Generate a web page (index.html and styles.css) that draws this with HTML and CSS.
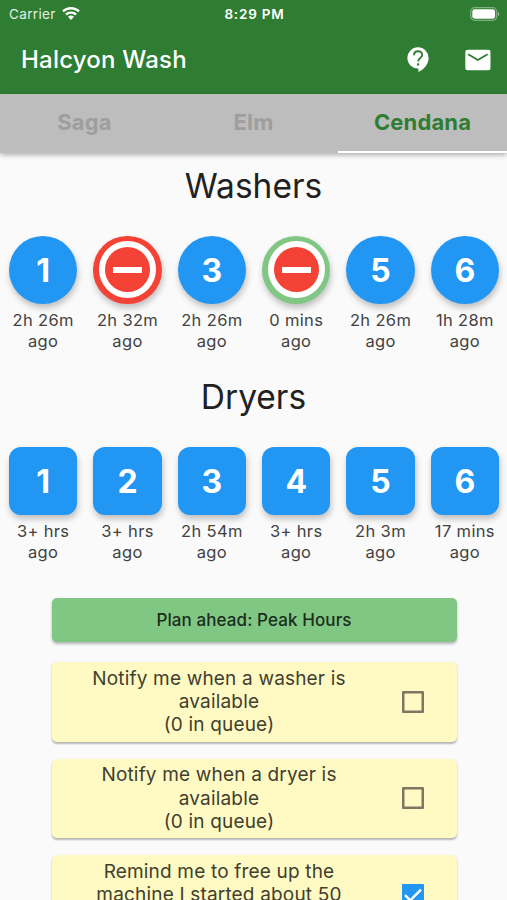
FILE: index.html
```html
<!DOCTYPE html>
<html lang="en">
<head>
    <meta charset="UTF-8">
    <title>Halcyon Wash</title>
    <link rel="stylesheet" href="styles.css">
</head>
<body>
    <header>
        <div class="status">
            <div class="carrier">
                <span>Carrier</span>
                <svg width="18" height="14" viewBox="0 0 18 14" fill="#fff">
                    <path d="M9 0C5.600 0 2.500 1.300 0.200 3.500L1.800 5.200C3.700 3.400 6.200 2.400 9 2.400S14.300 3.400 16.200 5.200L17.800 3.500C15.500 1.300 12.400 0 9 0Z"/>
                    <path d="M9 4.400C6.700 4.400 4.700 5.200 3.100 6.700L4.800 8.400C5.900 7.400 7.400 6.800 9 6.800S12.100 7.400 13.200 8.400L14.900 6.700C13.300 5.200 11.300 4.400 9 4.400Z"/>
                    <path d="M9 8.600C7.800 8.600 6.800 9 6 9.700L9 12.900L12 9.700C11.200 9 10.200 8.600 9 8.600Z"/>
                </svg>
            </div>
            <div class="clock">8:29 PM</div>
            <svg class="battery" width="30" height="14" viewBox="0 0 30 14">
                <rect x="0.700" y="0.700" width="26" height="12.600" rx="4" fill="none" stroke="#fff" stroke-opacity="0.4" stroke-width="1.200"/>
                <rect x="2.300" y="2.300" width="22.800" height="9.400" rx="2.400" fill="#fff"/>
                <path d="M28 4.800C29.800 5.600 29.800 8.400 28 9.200Z" fill="#fff" fill-opacity="0.5"/>
            </svg>
        </div>
        <div class="appbar">
            <h1>Halcyon Wash</h1>
            <svg class="help" width="22" height="25" viewBox="0 0 22 25">
                <path d="M11 0.300A10.600 10.600 0 1 0 11 21.500H11.400V24.900C17.500 22 21.600 16.800 21.600 10.900A10.600 10.600 0 0 0 11 0.300Z" fill="#fff"/>
                <path d="M7 8.200C7 3 15.200 3 15.200 7.800C15.200 10.900 11.100 11.200 11.100 14.600" fill="none" stroke="#2e7d32" stroke-width="1.900"/>
                <rect x="10" y="16.300" width="2.200" height="2.200" fill="#2e7d32"/>
            </svg>
            <svg class="mail" width="26" height="22" viewBox="0 0 26 22">
                <rect x="0.300" y="0.700" width="25.200" height="20.600" rx="2.300" fill="#fff"/>
                <path d="M3.200 5.200L12.900 11L22.600 5.200" fill="none" stroke="#2e7d32" stroke-width="1.900"/>
            </svg>
        </div>
        <nav class="tabs">
            <div class="tab">Saga</div>
            <div class="tab">Elm</div>
            <div class="tab active">Cendana</div>
        </nav>
    </header>

    <main>
        <h2>Washers</h2>
        <div class="machines">
            <div class="machine"><div class="button round">1</div><p>2h 26m<br>ago</p></div>
            <div class="machine"><div class="button round busy"><div class="stop"></div></div><p>2h 32m<br>ago</p></div>
            <div class="machine"><div class="button round">3</div><p>2h 26m<br>ago</p></div>
            <div class="machine"><div class="button round mine"><div class="stop"></div></div><p>0 mins<br>ago</p></div>
            <div class="machine"><div class="button round">5</div><p>2h 26m<br>ago</p></div>
            <div class="machine"><div class="button round">6</div><p>1h 28m<br>ago</p></div>
        </div>

        <h2>Dryers</h2>
        <div class="machines">
            <div class="machine"><div class="button">1</div><p>3+ hrs<br>ago</p></div>
            <div class="machine"><div class="button">2</div><p>3+ hrs<br>ago</p></div>
            <div class="machine"><div class="button">3</div><p>2h 54m<br>ago</p></div>
            <div class="machine"><div class="button">4</div><p>3+ hrs<br>ago</p></div>
            <div class="machine"><div class="button">5</div><p>2h 3m<br>ago</p></div>
            <div class="machine"><div class="button">6</div><p>17 mins<br>ago</p></div>
        </div>

        <div class="options">
            <div class="peak">Plan ahead: Peak Hours</div>
            <div class="card">
                <p>Notify me when a washer is<br>available<br>(0 in queue)</p>
                <div class="check"></div>
            </div>
            <div class="card">
                <p>Notify me when a dryer is<br>available<br>(0 in queue)</p>
                <div class="check"></div>
            </div>
            <div class="card">
                <p>Remind me to free up the<br>machine I started about 50</p>
                <div class="check checked">
                    <svg width="22" height="22" viewBox="0 0 22 22" fill="none" stroke="#fff" stroke-width="2.400">
                        <path d="M3 11.200L8.300 16.400L19 5.600"/>
                    </svg>
                </div>
            </div>
        </div>
    </main>
</body>
</html>
```
FILE: styles.css
```css
body {
    margin: 0;
    height: 900px;
    overflow: hidden;
    background-color: #fafafa;
    font-family: Inter, "Liberation Sans", sans-serif;
    color: #212121;
}

h1, h2, p {
    margin: 0;
    font-weight: 400;
}

header {
    background-color: #2e7d32;
    color: white;
}

.status {
    display: grid;
    grid-template-columns: 1fr auto 1fr;
    align-items: center;
    height: 25px;
    padding: 2px 7px 0 9px;
    box-sizing: border-box;
    font-size: 13.5px;
}

.carrier {
    display: flex;
    align-items: center;
    gap: 6px;
    color: #e3efe3;
    letter-spacing: 0.35px;
}

.clock {
    font-weight: 600;
    letter-spacing: 0.8px;
}

.battery {
    justify-self: end;
}

.appbar {
    display: flex;
    align-items: center;
    height: 69px;
    padding: 0 16px 0 21px;
    box-sizing: border-box;
}

h1 {
    flex: 1;
    font-size: 24px;
    font-weight: 500;
    letter-spacing: 0.2px;
}

.mail {
    margin-left: 36px;
}

.tabs {
    display: flex;
    height: 58.500px;
    background-color: #bdbdbd;
    box-shadow: 0 2px 5px rgba(0,0,0,0.3);
}

.tab {
    flex: 1;
    box-sizing: border-box;
    border-bottom: 2.500px solid transparent;
    text-align: center;
    line-height: 57px;
    font-size: 22px;
    font-weight: 700;
    letter-spacing: 0.150px;
    color: #9e9e9e;
}

.active {
    color: #2e7d32;
    border-bottom-color: white;
}

h2 {
    padding: 12px 0 1px;
    text-align: center;
    font-size: 33.500px;
    line-height: 42px;
}

.machines {
    display: grid;
    grid-template-columns: repeat(6, 84.350px);
    height: 156px;
    padding-top: 28px;
    padding-left: 1px;
    box-sizing: border-box;
}

.machine {
    display: flex;
    flex-direction: column;
    align-items: center;
}

.machine p {
    margin-top: 6px;
    text-align: center;
    font-size: 16.500px;
    line-height: 21px;
    letter-spacing: 0.35px;
    color: #424242;
}

.button {
    display: flex;
    align-items: center;
    justify-content: center;
    flex-shrink: 0;
    box-sizing: border-box;
    width: 68.500px;
    height: 68.500px;
    padding-top: 2px;
    border-radius: 12px;
    background-color: #2196f3;
    box-shadow: 1px 4px 6px rgba(0,0,0,0.24);
    color: white;
    font-size: 32px;
    font-weight: 700;
}

.round {
    border-radius: 50%;
}

.busy, .mine {
    padding-top: 0;
}

.busy {
    background-color: #f44336;
}

.mine {
    background-color: #81c784;
}

.stop {
    display: flex;
    align-items: center;
    justify-content: center;
    width: 45px;
    height: 45px;
    border: 6px solid white;
    border-radius: 50%;
    background-color: #f44336;
}

.stop::before {
    content: "";
    width: 29px;
    height: 6px;
    background-color: white;
}

.options {
    padding: 23.500px 50.500px 0 51.500px;
}

.peak {
    height: 44px;
    line-height: 44px;
    border-radius: 5px;
    background-color: #81c784;
    box-shadow: 0 2px 3px rgba(0,0,0,0.28);
    text-align: center;
    font-size: 17px;
    font-weight: 500;
    letter-spacing: 0.1px;
    color: #1b2e1c;
}

.card {
    display: flex;
    align-items: center;
    height: 79.500px;
    margin-top: 17px;
    border-radius: 5px;
    background-color: #fff9c4;
    box-shadow: 0 1.500px 2px rgba(0,0,0,0.28);
}

.peak + .card {
    margin-top: 20px;
}

.card p {
    width: 335px;
    height: 70px;
    text-align: center;
    font-size: 19px;
    line-height: 23.300px;
    letter-spacing: 0.18px;
    color: #40402f;
}

.check {
    width: 22px;
    height: 22px;
    margin-left: 15px;
    border-radius: 1px;
    box-shadow: inset 0 0 0 2.500px #7b7861;
}

.checked {
    box-shadow: none;
    background-color: #2196f3;
}

.checked svg {
    display: block;
}
```
